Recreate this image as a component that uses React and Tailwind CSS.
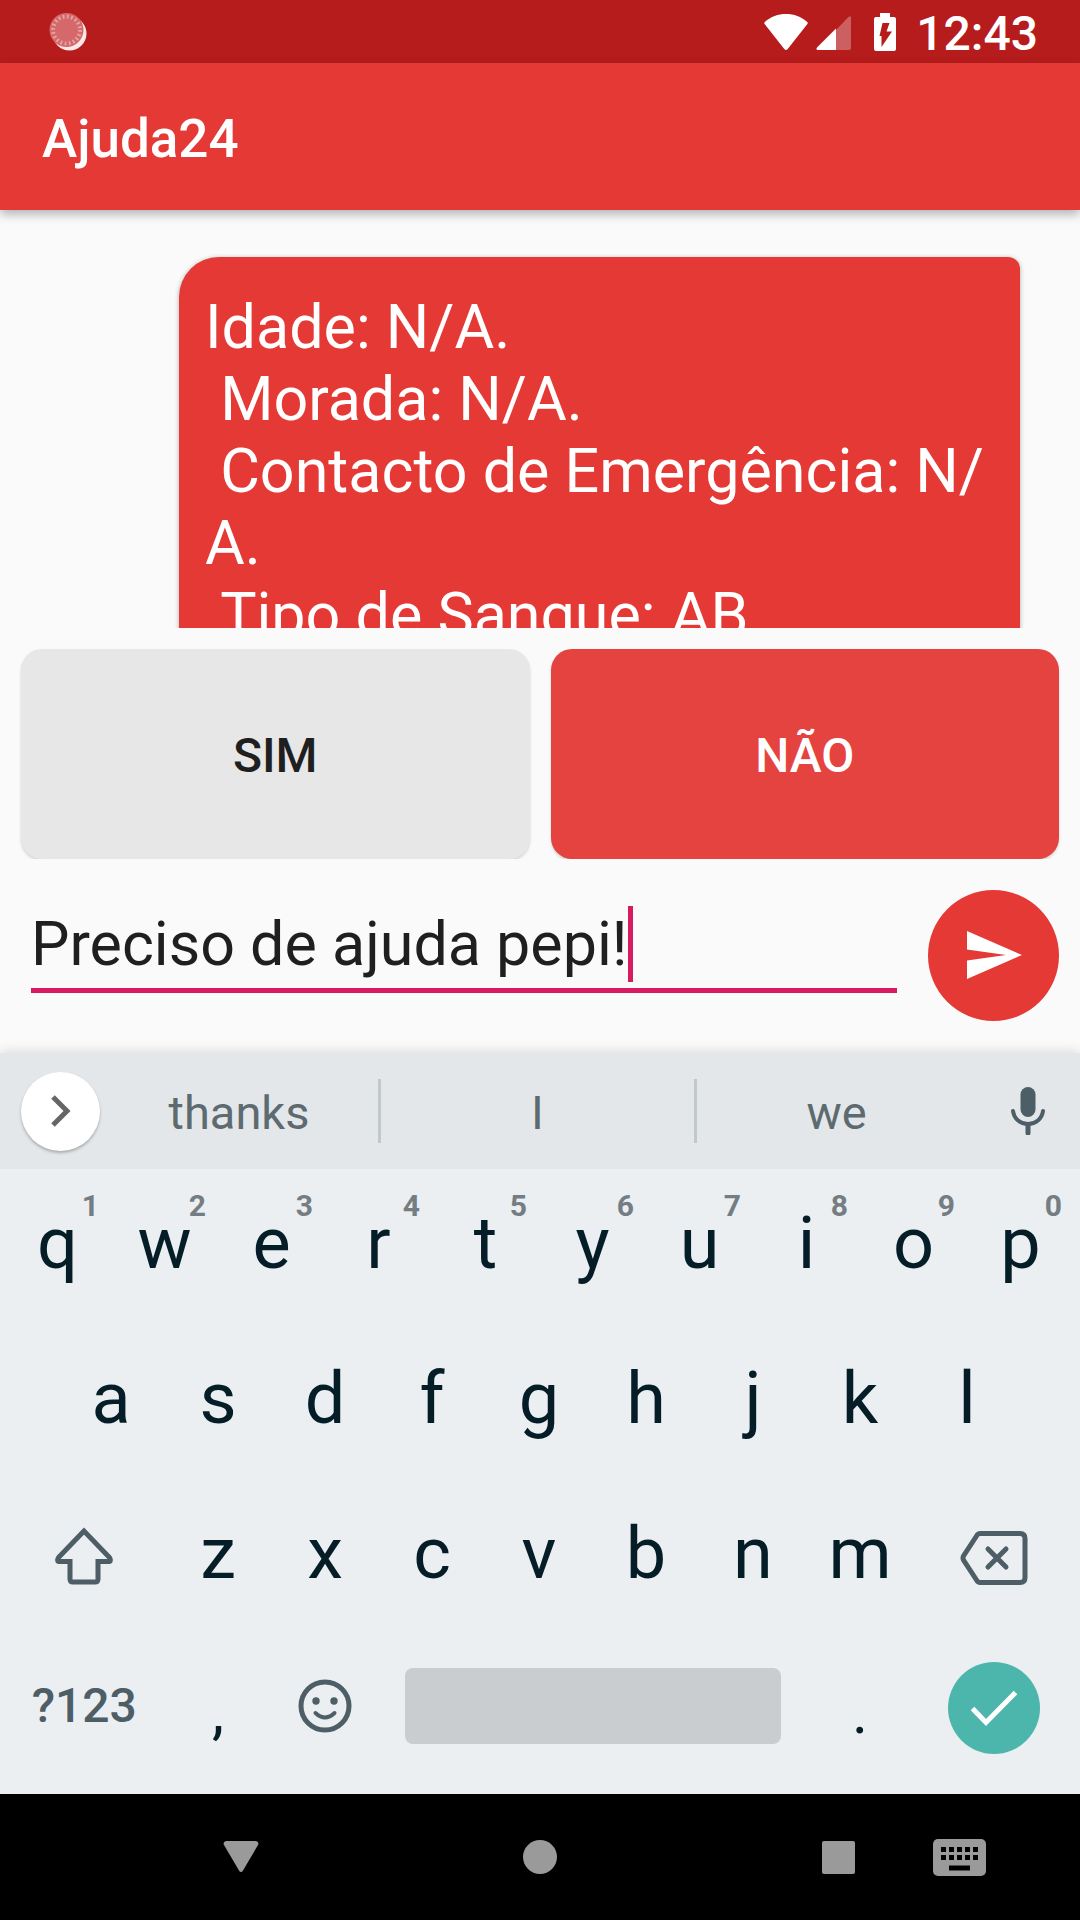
import React, { useState } from 'react';

const TOP_ROW = [
  ['q', '1'], ['w', '2'], ['e', '3'], ['r', '4'], ['t', '5'],
  ['y', '6'], ['u', '7'], ['i', '8'], ['o', '9'], ['p', '0'],
];
const HOME_ROW = ['a', 's', 'd', 'f', 'g', 'h', 'j', 'k', 'l'];
const BOTTOM_ROW = ['z', 'x', 'c', 'v', 'b', 'n', 'm'];

/** Android status bar: running-task spinner on the left, system icons and clock on the right */
function StatusBar() {
  return (
    <div className="flex h-[63px] shrink-0 items-center justify-between bg-[#b71c1c] pl-[49px] pr-[42px]">
      <svg width="40" height="40" viewBox="0 0 40 40" aria-hidden="true">
        <circle cx="20.500" cy="21.500" r="17" fill="#fbe9e7" />
        <circle cx="17.500" cy="18" r="17" fill="#d4686a" />
        <circle cx="17.500" cy="18" r="13.500" fill="none" stroke="#e4a3a4" strokeWidth="4" strokeDasharray="1.800 2.440" />
      </svg>
      <div className="flex items-center">
        <svg width="44" height="38" viewBox="0 0 44 38" fill="#fff" aria-hidden="true">
          <path d="M.8 9C7 3.500 14 1 22 1s15 2.500 21.200 8q1 1 .2 2L23.700 36q-1.700 2-3.400 0L.6 11q-.8-1 .2-2z" />
        </svg>
        <svg className="ml-2" width="36" height="38" viewBox="0 0 36 38" fill="#fff" aria-hidden="true">
          <path d="M20 17 32.500 4Q35 2 35 5v29q0 3-2 3H20z" opacity=".3" />
          <path d="M20 15.500V37H2q-2.500 0-1-2.500z" />
        </svg>
        <svg className="ml-[22px]" width="22" height="38" viewBox="0 0 22 38" aria-hidden="true">
          <path d="M6 0h10v4h4q2 0 2 2v30q0 2-2 2H2q-2 0-2-2V6q0-2 2-2h4z" fill="#fff" />
          <path d="M8.500 10h7l-3 8.500H18L7.500 34v-11H5.500z" fill="#b71c1c" />
        </svg>
        <span className="ml-5 pt-1 text-5xl leading-[64px] font-medium text-white">12:43</span>
      </div>
    </div>
  );
}

function Key({ label, hint, className = '' }) {
  return (
    <button className={`relative col-span-2 h-full text-7xl leading-[72px] text-[#051d26] ${className}`}>
      {label}
      {hint && (
        <span className="absolute top-[19px] right-3 text-3xl leading-9 font-bold text-[#747d82]">{hint}</span>
      )}
    </button>
  );
}

function PunctuationKey({ label }) {
  return (
    <button className="col-span-2 h-full pt-3 text-[61px] leading-[72px] text-[#051d26]">{label}</button>
  );
}

function IconKey({ label, className, children }) {
  return (
    <button aria-label={label} className={`flex h-full items-center justify-center text-[#4d5e66] ${className}`}>
      {children}
    </button>
  );
}

function KeyRow({ children, className = 'pb-1.5' }) {
  return <div className={`grid h-[155px] grid-cols-20 ${className}`}>{children}</div>;
}

function Suggestion({ children, last }) {
  return (
    <button className={`h-16 border-[#c2c7c9] pt-1 text-[47px] leading-[60px] text-[#5d6a70] ${last ? '' : 'border-r-3'}`}>
      {children}
    </button>
  );
}

function Keyboard() {
  return (
    <div className="relative z-10 shrink-0 bg-[#ebeff2] shadow-[0_0_12px_rgba(0,0,0,0.16)]">
      {/* Suggestion strip */}
      <div className="grid h-[116px] grid-cols-[100px_281fr_316fr_279fr_104px] items-center bg-[#e3e7e9]">
        <button
          aria-label="Expand"
          className="ml-[21px] flex size-[79px] items-center justify-center rounded-full bg-white shadow-[0_2px_3px_rgba(0,0,0,0.25)]"
        >
          <svg width="20" height="32" viewBox="0 0 20 32" fill="none" stroke="#666" strokeWidth="5" aria-hidden="true">
            <path d="M2 2l14 14L2 30" />
          </svg>
        </button>
        <Suggestion>thanks</Suggestion>
        <Suggestion>I</Suggestion>
        <Suggestion last>we</Suggestion>
        <IconKey label="Voice input">
          <svg width="34" height="48" viewBox="0 0 34 48" fill="none" stroke="currentColor" strokeLinecap="round" aria-hidden="true">
            <rect x="9.500" y="0" width="15" height="30" rx="7.500" fill="currentColor" stroke="none" />
            <path d="M2 24c1 8 7.500 13 15 13s14-5 15-13" strokeWidth="4" />
            <path d="M17 38v8" strokeWidth="5" />
          </svg>
        </IconKey>
      </div>

      {/* Letter rows: each letter spans two of twenty columns so rows can be offset by half a key */}
      <div className="pr-1.5 pb-[5px] pl-1">
        <KeyRow>
          {TOP_ROW.map(([letter, digit]) => (
            <Key key={letter} label={letter} hint={digit} />
          ))}
        </KeyRow>
        <KeyRow>
          {HOME_ROW.map((letter) => (
            <Key key={letter} label={letter} className="first:col-start-2" />
          ))}
        </KeyRow>
        <KeyRow>
          <IconKey label="Shift" className="col-span-3 pt-1.5">
            <svg width="60" height="60" viewBox="0 0 60 60" fill="none" stroke="currentColor" strokeWidth="5" aria-hidden="true">
              <path d="M30 4 4.500 30.500q-2.500 4 1.500 4H16V52q0 3 3 3h22q3 0 3-3V34.500h10q4 0 1.500-4z" />
            </svg>
          </IconKey>
          {BOTTOM_ROW.map((letter) => (
            <Key key={letter} label={letter} />
          ))}
          <IconKey label="Backspace" className="col-span-3 pt-2">
            <svg width="68" height="54" viewBox="0 0 68 54" fill="none" stroke="currentColor" strokeWidth="5" aria-hidden="true">
              <path d="M20 2.500h40q5 0 5 5v39q0 5-5 5H20q-2 0-3.500-2.500L3.500 29q-1-2 0-4L16.500 5Q18 2.500 20 2.500z" />
              <path d="M28 18l18 18M46 18 28 36" strokeLinecap="round" />
            </svg>
          </IconKey>
        </KeyRow>
        <KeyRow className="pb-3">
          <button className="col-span-3 text-5xl leading-[64px] font-medium text-[#4d5e66]">?123</button>
          <PunctuationKey label="," />
          <IconKey label="Emoji" className="col-span-2">
            <svg width="54" height="54" viewBox="0 0 54 54" fill="none" stroke="currentColor" aria-hidden="true">
              <circle cx="27" cy="27" r="24" strokeWidth="5" />
              <circle cx="18" cy="22" r="3.700" fill="currentColor" stroke="none" />
              <circle cx="36" cy="22" r="3.700" fill="currentColor" stroke="none" />
              <path d="M17.500 34q9.500 9 19 0" strokeWidth="4" strokeLinecap="round" />
            </svg>
          </IconKey>
          <IconKey label="Space" className="col-span-8 px-[26px]">
            <span className="h-[76px] w-full rounded-lg bg-[#c9cdd0]" />
          </IconKey>
          <PunctuationKey label="." />
          <IconKey label="Done" className="col-span-3 pt-1">
            <span className="flex size-[92px] items-center justify-center rounded-full bg-[#4db6ac]">
              <svg width="48" height="38" viewBox="0 0 48 38" fill="none" stroke="#fff" strokeWidth="5" aria-hidden="true">
                <path d="M2.500 19.500 16 33.500 45.500 3.500" />
              </svg>
            </span>
          </IconKey>
        </KeyRow>
      </div>
    </div>
  );
}

function NavButton({ label, children }) {
  return (
    <button aria-label={label} className="flex h-full w-[121px] items-center justify-center">
      {children}
    </button>
  );
}

function NavigationBar() {
  return (
    <nav className="flex h-[126px] shrink-0 items-center bg-black pr-[60px] pl-[180px]">
      <NavButton label="Back">
        <svg width="36" height="32" viewBox="0 0 36 32" fill="#9a9a9a" aria-hidden="true">
          <path d="M3 0h30q3.500 1 2 4L20 29.500q-2 3-4 0L1 4Q-.5 1 3 0z" />
        </svg>
      </NavButton>
      <div className="flex flex-1 justify-center">
        <NavButton label="Home">
          <span className="size-[34px] rounded-full bg-[#9a9a9a]" />
        </NavButton>
      </div>
      <NavButton label="Recent apps">
        <span className="size-[33px] rounded-xs bg-[#9a9a9a]" />
      </NavButton>
      <NavButton label="Change keyboard">
        <svg width="53" height="37" viewBox="0 0 53 37" aria-hidden="true">
          <rect width="53" height="37" rx="5" fill="#9a9a9a" />
          <path d="M8 10.500h38M8 18.500h38" stroke="#000" strokeWidth="5" strokeDasharray="5 3" />
          <path d="M16 29h21" stroke="#000" strokeWidth="5" />
        </svg>
      </NavButton>
    </nav>
  );
}

export default function App() {
  const [message, setMessage] = useState('Preciso de ajuda pepi!');

  return (
    <div className="flex h-screen flex-col overflow-hidden bg-[#fafafa] font-['Roboto',sans-serif]">
      <StatusBar />

      <header className="relative z-10 flex h-[147px] shrink-0 items-center bg-[#e53935] px-[42px] shadow-[0_4px_10px_rgba(0,0,0,0.3)]">
        <h1 className="pt-1 text-[53px] leading-[64px] font-medium text-white">Ajuda24</h1>
      </header>

      {/* Conversation, cut off by the quick replies while the keyboard is open */}
      <main className="min-h-0 flex-1 overflow-hidden pt-[47px] pr-[60px] pl-[179px]">
        <div className="rounded-tl-[40px] rounded-tr-xl bg-[#e53935] px-[26px] pt-[34px] text-[61px] leading-[72px] whitespace-pre-wrap text-white shadow-[0_1px_5px_rgba(0,0,0,0.3)]">
          <p>Idade: N/A.</p>
          <p> Morada: N/A.</p>
          <p> Contacto de Emergência: N/<wbr />A.</p>
          <p> Tipo de Sangue: AB</p>
        </div>
      </main>

      {/* Quick replies */}
      <div className="mt-[21px] grid h-[210px] shrink-0 grid-cols-2 gap-[21px] overflow-hidden px-[21px]">
        <button className="rounded-[21px] bg-[#e7e7e7] pt-1 text-5xl leading-[64px] font-medium text-[#1f1f1f] shadow-[0_2px_3px_rgba(0,0,0,0.15)]">
          SIM
        </button>
        <button className="rounded-[21px] bg-[#e5433f] pt-1 text-5xl leading-[64px] font-medium text-white shadow-[0_2px_3px_rgba(0,0,0,0.15)]">
          NÃO
        </button>
      </div>

      <form className="flex h-[194px] shrink-0 items-center gap-[31px] pr-[21px] pb-0.5 pl-[31px]" onSubmit={(e) => e.preventDefault()}>
        <div className="mb-3 flex min-w-0 flex-1 border-b-5 border-[#d81b60] pb-1.5">
          <input
            type="text"
            aria-label="Mensagem"
            value={message}
            onChange={(e) => setMessage(e.target.value)}
            className="field-sizing-content h-[76px] text-[61px] leading-[72px] text-[#1f1f1f] caret-transparent outline-none"
          />
          <span className="h-[76px] w-[5px] bg-[#d81b60]" />
        </div>
        <button aria-label="Enviar" className="flex size-[131px] shrink-0 items-center justify-center rounded-full bg-[#e53935]">
          <svg className="ml-0.5" width="55" height="48" viewBox="0 0 55 48" fill="#fff" aria-hidden="true">
            <path d="M0 0 55 24 0 48V29.500L39 24 0 18.500z" />
          </svg>
        </button>
      </form>

      <Keyboard />
      <NavigationBar />
    </div>
  );
}
